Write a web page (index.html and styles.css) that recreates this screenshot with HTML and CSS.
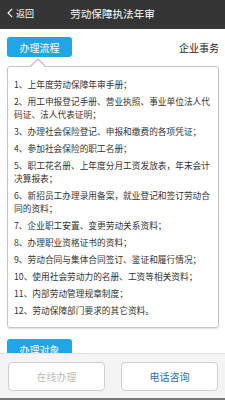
FILE: index.html
```html
<!DOCTYPE html>
<html lang="zh-CN">
<head>
<meta charset="utf-8">
<link rel="stylesheet" href="styles.css">
</head>
<body>
<div class="app">
  <header class="topbar">
    <div class="back"><svg class="chev" width="6" height="10" viewBox="0 0 6 10"><path d="M5.2 0.8 L1 5 L5.2 9.2" fill="none" stroke="#fff" stroke-width="1.1"/></svg><span>返回</span></div>
    <div class="title">劳动保障执法年审</div>
  </header>
  <main class="content">
    <div class="tabrow">
      <div class="tab">办理流程</div>
      <div class="cat">企业事务</div>
    </div>
    <div class="card">
      <p>1、上年度劳动保障年审手册；</p>
      <p>2、用工申报登记手册、营业执照、事业单位法人代码证、法人代表证明；</p>
      <p>3、办理社会保险登记、申报和缴费的各项凭证；</p>
      <p>4、参加社会保险的职工名册；</p>
      <p>5、职工花名册、上年度分月工资发放表，年末会计决算报表；</p>
      <p>6、新招员工办理录用备案，就业登记和签订劳动合同的资料；</p>
      <p>7、企业职工安置、变更劳动关系资料；</p>
      <p>8、办理职业资格证书的资料；</p>
      <p>9、劳动合同与集体合同签订、鉴证和履行情况；</p>
      <p>10、使用社会劳动力的名册、工资等相关资料；</p>
      <p>11、内部劳动管理规章制度；</p>
      <p>12、劳动保障部门要求的其它资料。</p>
    </div>
    <div class="tabrow second">
      <div class="tab">办理对象</div>
    </div>
  </main>
  <footer class="bottombar">
    <div class="btn disabled">在线办理</div>
    <div class="btn primary">电话咨询</div>
  </footer>
</div>
</body>
</html>
```
FILE: styles.css
```css
* { box-sizing: border-box; }
html, body { margin: 0; padding: 0; }
body {
  width: 225px;
  height: 400px;
  overflow: hidden;
  font-family: "Noto Sans CJK SC", "Noto Sans", sans-serif;
  background: #fff;
  color: #333;
}
.app {
  height: 400px;
  display: flex;
  flex-direction: column;
}
.topbar {
  height: 29px;
  flex: none;
  background: #353535;
  color: #fff;
  display: flex;
  align-items: center;
  position: relative;
  padding: 0 0 3px 7px;
}
.back {
  display: flex;
  align-items: center;
  font-size: 9px;
  gap: 3px;
  z-index: 1;
}
.title {
  position: absolute;
  left: 0;
  right: 0;
  top: 0;
  bottom: 3px;
  display: flex;
  align-items: center;
  justify-content: center;
  font-size: 10.6px;
}
.content {
  flex: 1;
  overflow: hidden;
  padding: 8px 6px 0 7px;
}
.tabrow {
  display: flex;
  justify-content: space-between;
  align-items: center;
}
.tab {
  width: 65px;
  height: 20px;
  background: #1ea6e8;
  color: #fff;
  border-radius: 3px;
  font-size: 10px;
  display: flex;
  align-items: center;
  justify-content: center;
}
.cat {
  font-size: 10px;
  color: #222;
}
.card {
  position: relative;
  margin-top: 9px;
  border: 1px solid #c4c4c4;
  border-radius: 3px;
  box-shadow: 0 1px 1px rgba(0,0,0,0.12);
  padding: 9px 5px 8px 6px;
  font-size: 8.7px;
  line-height: 13px;
  color: #333;
}
.card::before {
  content: "";
  position: absolute;
  left: 22px;
  top: -9px;
  border-left: 8px solid transparent;
  border-right: 8px solid transparent;
  border-bottom: 8px solid #c4c4c4;
}
.card::after {
  content: "";
  position: absolute;
  left: 23px;
  top: -7px;
  border-left: 7px solid transparent;
  border-right: 7px solid transparent;
  border-bottom: 7px solid #fff;
}
.card p {
  margin: 0;
  padding: 2px 0;
}
.second {
  margin-top: 11px;
}
.bottombar {
  flex: none;
  height: 47px;
  background: #f4f4f4;
  border-top: 1px solid #e2e2e2;
  border-bottom: 2px solid #777;
  padding: 8px 7px 0 8px;
  display: flex;
  gap: 16px;
}
.btn {
  flex: 1;
  height: 29px;
  background: #fff;
  border: 1px solid #cfcfcf;
  border-radius: 4px;
  font-size: 10px;
  display: flex;
  align-items: center;
  justify-content: center;
}
.disabled { color: #bdbdbd; }
.primary { color: #2b6ea5; }
```
